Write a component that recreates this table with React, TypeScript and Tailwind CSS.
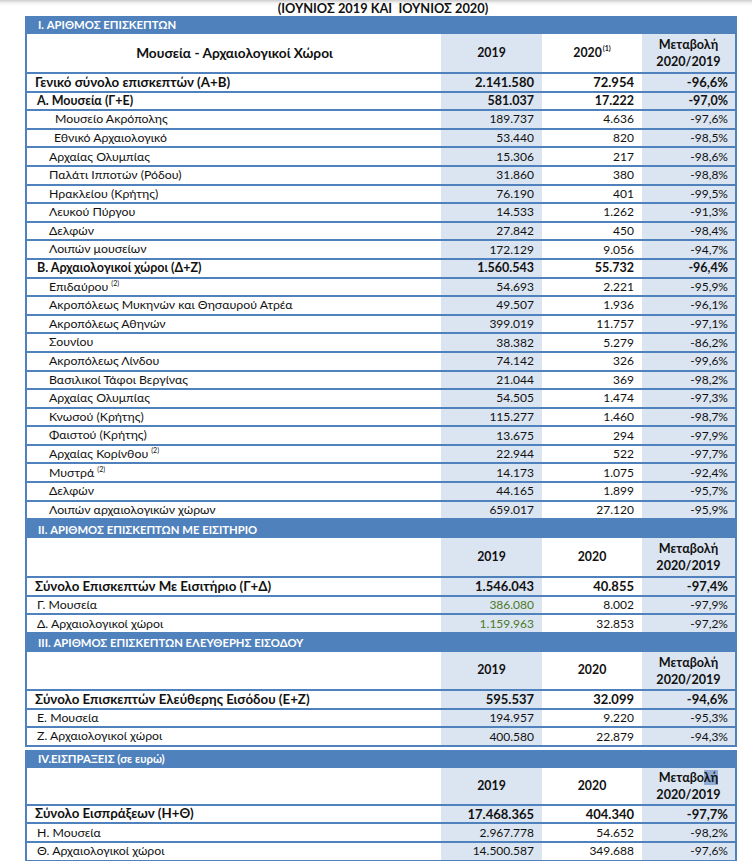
import React from "react";

type R = {
  label: string;
  a: string;
  b: string;
  c: string;
  kind?: "total" | "sub" | "normal";
  indent?: number;
  sup?: string;
  green?: boolean;
};

const GRID = "grid grid-cols-[414px_101px_100px_93px]";

function SectionHeader({ text }: { text: string }) {
  return (
    <div className="h-[18px] bg-[#4f81bd] flex items-center pl-[11px] text-white font-bold text-[11.3px] leading-none">
      {text}
    </div>
  );
}

function ColHeader({ title, sup, h, hl }: { title?: string; sup?: boolean; h: string; hl?: boolean }) {
  return (
    <div className={`${GRID} ${h} border-b-2 border-[#4f81bd] font-bold text-[12.3px] text-[#111]`}>
      <div className="flex items-center justify-center text-[13.7px] pl-[1px]">{title ?? ""}</div>
      <div className="bg-[#dbe5f1] flex items-center justify-center">2019</div>
      <div className="flex items-center justify-center">
        2020{sup ? <sup className="text-[7px] ml-[1px] -top-[5px]">(1)</sup> : null}
      </div>
      <div className="bg-[#dbe5f1] flex flex-col items-center justify-center leading-[17px] text-[12.6px]">
        {hl ? (
          <span>
            Μεταβο<span className="bg-[#8eaad4]">λή</span>
          </span>
        ) : (
          <span>Μεταβολή</span>
        )}
        <span>2020/2019</span>
      </div>
    </div>
  );
}

function Row({ r }: { r: R }) {
  const kind = r.kind ?? "normal";
  const labelCls =
    kind === "total"
      ? "font-bold text-[13.3px]"
      : kind === "sub"
      ? "font-bold text-[12.5px]"
      : "text-[12.3px]";
  const numCls =
    kind === "total"
      ? "font-bold text-[13px]"
      : kind === "sub"
      ? "font-bold text-[12.5px]"
      : "text-[12px]";
  return (
    <div className={`${GRID} h-[18.6px] border-b-2 border-[#4f81bd] text-[#111] leading-none`}>
      <div className={`flex items-center whitespace-nowrap ${labelCls}`} style={{ paddingLeft: r.indent ?? 8 }}>
        {r.label}
        {r.sup ? <sup className="text-[7px] ml-[3px] -top-[4px]">{r.sup}</sup> : null}
      </div>
      <div
        className={`bg-[#dbe5f1] flex items-center justify-end pr-[8px] ${numCls} ${r.green ? "text-[#4b7a2a]" : ""}`}
      >
        {r.a}
      </div>
      <div className={`flex items-center justify-end pr-[8px] ${numCls}`}>{r.b}</div>
      <div className={`bg-[#dbe5f1] flex items-center justify-end pr-[7px] ${numCls}`}>{r.c}</div>
    </div>
  );
}

const sec1: R[] = [
  { label: "Γενικό σύνολο επισκεπτών (Α+Β)", a: "2.141.580", b: "72.954", c: "-96,6%", kind: "total", indent: 8 },
  { label: "Α. Μουσεία (Γ+Ε)", a: "581.037", b: "17.222", c: "-97,0%", kind: "sub", indent: 10 },
  { label: "Μουσείο Ακρόπολης", a: "189.737", b: "4.636", c: "-97,6%", indent: 28 },
  { label: "Εθνικό Αρχαιολογικό", a: "53.440", b: "820", c: "-98,5%", indent: 27 },
  { label: "Αρχαίας Ολυμπίας", a: "15.306", b: "217", c: "-98,6%", indent: 22 },
  { label: "Παλάτι Ιπποτών (Ρόδου)", a: "31.860", b: "380", c: "-98,8%", indent: 22 },
  { label: "Ηρακλείου (Κρήτης)", a: "76.190", b: "401", c: "-99,5%", indent: 22 },
  { label: "Λευκού Πύργου", a: "14.533", b: "1.262", c: "-91,3%", indent: 22 },
  { label: "Δελφών", a: "27.842", b: "450", c: "-98,4%", indent: 22 },
  { label: "Λοιπών μουσείων", a: "172.129", b: "9.056", c: "-94,7%", indent: 22 },
  { label: "Β. Αρχαιολογικοί χώροι (Δ+Ζ)", a: "1.560.543", b: "55.732", c: "-96,4%", kind: "sub", indent: 10 },
  { label: "Επιδαύρου", sup: "(2)", a: "54.693", b: "2.221", c: "-95,9%", indent: 22 },
  { label: "Ακροπόλεως Μυκηνών και Θησαυρού Ατρέα", a: "49.507", b: "1.936", c: "-96,1%", indent: 22 },
  { label: "Ακροπόλεως Αθηνών", a: "399.019", b: "11.757", c: "-97,1%", indent: 22 },
  { label: "Σουνίου", a: "38.382", b: "5.279", c: "-86,2%", indent: 22 },
  { label: "Ακροπόλεως Λίνδου", a: "74.142", b: "326", c: "-99,6%", indent: 22 },
  { label: "Βασιλικοί Τάφοι Βεργίνας", a: "21.044", b: "369", c: "-98,2%", indent: 22 },
  { label: "Αρχαίας Ολυμπίας", a: "54.505", b: "1.474", c: "-97,3%", indent: 22 },
  { label: "Κνωσού (Κρήτης)", a: "115.277", b: "1.460", c: "-98,7%", indent: 22 },
  { label: "Φαιστού (Κρήτης)", a: "13.675", b: "294", c: "-97,9%", indent: 22 },
  { label: "Αρχαίας Κορίνθου", sup: "(2)", a: "22.944", b: "522", c: "-97,7%", indent: 22 },
  { label: "Μυστρά", sup: "(2)", a: "14.173", b: "1.075", c: "-92,4%", indent: 22 },
  { label: "Δελφών", a: "44.165", b: "1.899", c: "-95,7%", indent: 22 },
  { label: "Λοιπών αρχαιολογικών χώρων", a: "659.017", b: "27.120", c: "-95,9%", indent: 22 },
];

const sec2: R[] = [
  { label: "Σύνολο Επισκεπτών Με Εισιτήριο (Γ+Δ)", a: "1.546.043", b: "40.855", c: "-97,4%", kind: "total", indent: 8 },
  { label: "Γ. Μουσεία", a: "386.080", b: "8.002", c: "-97,9%", indent: 10, green: true },
  { label: "Δ. Αρχαιολογικοί χώροι", a: "1.159.963", b: "32.853", c: "-97,2%", indent: 10, green: true },
];

const sec3: R[] = [
  { label: "Σύνολο Επισκεπτών Ελεύθερης Εισόδου (Ε+Ζ)", a: "595.537", b: "32.099", c: "-94,6%", kind: "total", indent: 8 },
  { label: "Ε. Μουσεία", a: "194.957", b: "9.220", c: "-95,3%", indent: 10 },
  { label: "Ζ. Αρχαιολογικοί χώροι", a: "400.580", b: "22.879", c: "-94,3%", indent: 10 },
];

const sec4: R[] = [
  { label: "Σύνολο Εισπράξεων (Η+Θ)", a: "17.468.365", b: "404.340", c: "-97,7%", kind: "total", indent: 8 },
  { label: "Η. Μουσεία", a: "2.967.778", b: "54.652", c: "-98,2%", indent: 10 },
  { label: "Θ. Αρχαιολογικοί χώροι", a: "14.500.587", b: "349.688", c: "-97,6%", indent: 10 },
];

export default function App() {
  return (
    <div
      className="w-[752px] h-[861px] overflow-hidden bg-white text-[#111]"
      style={{ fontFamily: "Lato, 'Open Sans', sans-serif" }}
    >
      <div className="h-[16px] bg-[linear-gradient(to_bottom,#cdcdcd_0px,#f4f4f4_3px,#ffffff_6px)] flex items-center justify-center pl-[14px]">
        <span className="font-bold text-[12.8px] leading-none whitespace-pre">(ΙΟΥΝΙΟΣ 2019 ΚΑΙ  ΙΟΥΝΙΟΣ 2020)</span>
      </div>
      <div className="ml-[25px] w-[712px]">
        <div className="border-x-2 border-[#4f81bd]">
          <SectionHeader text="I. ΑΡΙΘΜΟΣ ΕΠΙΣΚΕΠΤΩΝ" />
          <ColHeader title="Μουσεία - Αρχαιολογικοί Χώροι" sup h="h-[40px]" />
          {sec1.map((r, i) => (
            <Row key={i} r={r} />
          ))}
          <SectionHeader text="II. ΑΡΙΘΜΟΣ ΕΠΙΣΚΕΠΤΩΝ ΜΕ ΕΙΣΙΤΗΡΙΟ" />
          <ColHeader h="h-[40px]" />
          {sec2.map((r, i) => (
            <Row key={i} r={r} />
          ))}
          <SectionHeader text="III. ΑΡΙΘΜΟΣ ΕΠΙΣΚΕΠΤΩΝ ΕΛΕΥΘΕΡΗΣ ΕΙΣΟΔΟΥ" />
          <ColHeader h="h-[39px]" />
          {sec3.map((r, i) => (
            <Row key={i} r={r} />
          ))}
        </div>
        <div className="mt-[3px] border-x-2 border-[#4f81bd]">
          <SectionHeader text="IV.ΕΙΣΠΡΑΞΕΙΣ (σε ευρώ)" />
          <ColHeader h="h-[38px]" hl />
          {sec4.map((r, i) => (
            <Row key={i} r={r} />
          ))}
        </div>
      </div>
    </div>
  );
}
